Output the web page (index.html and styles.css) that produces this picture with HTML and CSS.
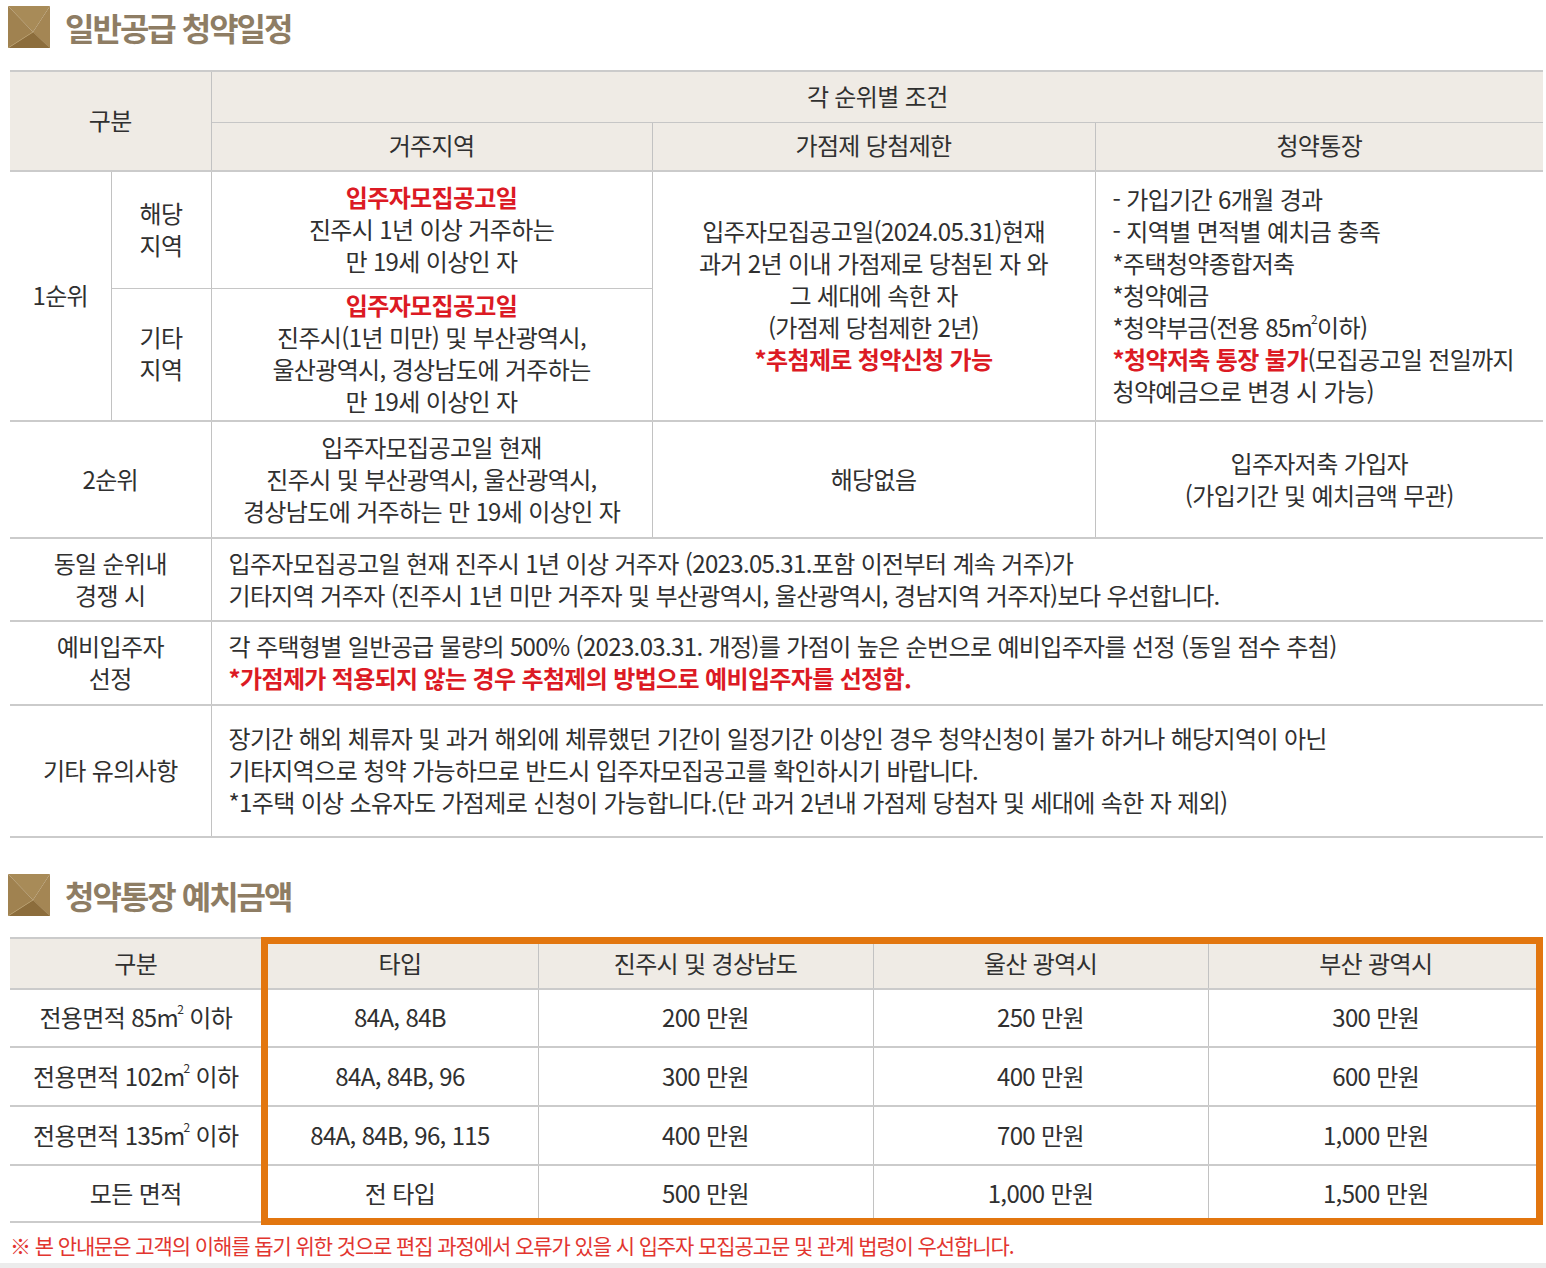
FILE: index.html
```html
<!DOCTYPE html>
<html lang="ko">
<head>
<meta charset="utf-8">
<title>일반공급 청약일정</title>
<link rel="stylesheet" href="styles.css">
</head>
<body>
<div class="page">
  <div class="section-title first">
    <svg class="title-icon" viewBox="0 0 42 42" width="42" height="42" aria-hidden="true">
      <polygon points="0,0 42,0 25,26" fill="#a88b58"/>
      <polygon points="0,0 25,26 0,42" fill="#a08250"/>
      <polygon points="42,0 42,42 25,26" fill="#a48654"/>
      <polygon points="0,42 25,26 42,42" fill="#8c6d3c"/>
      <line x1="0" y1="42" x2="25" y2="26" stroke="#b99e6c" stroke-width="0.8"/>
      <line x1="42" y1="42" x2="25" y2="26" stroke="#9a7a46" stroke-width="0.6"/>
    </svg>
    <h2 class="title-text">일반공급 청약일정</h2>
  </div>

  <table class="tbl sched">
    <colgroup>
      <col class="w101"><col class="w100"><col class="w441"><col class="w443"><col class="w448">
    </colgroup>
    <thead>
      <tr class="h-a">
        <th colspan="2" rowspan="2">구분</th>
        <th colspan="3" class="th-top">각 순위별 조건</th>
      </tr>
      <tr class="h-b">
        <th>거주지역</th>
        <th>가점제 당첨제한</th>
        <th>청약통장</th>
      </tr>
    </thead>
    <tbody>
      <tr class="r1a">
        <td rowspan="2" class="lab">1순위</td>
        <td class="lab">해당<br>지역</td>
        <td class="inner-b"><span class="red">입주자모집공고일</span><br>진주시 1년 이상 거주하는<br>만 19세 이상인 자</td>
        <td rowspan="2">입주자모집공고일(2024.05.31)현재<br>과거 2년 이내 가점제로 당첨된 자 와<br>그 세대에 속한 자<br>(가점제 당첨제한 2년)<br><span class="red">*추첨제로 청약신청 가능</span></td>
        <td rowspan="2" class="left">- 가입기간 6개월 경과<br>- 지역별 면적별 예치금 충족<br>*주택청약종합저축<br>*청약예금<br>*청약부금(전용 85m<span class="sup">2</span>이하)<br><span class="red">*청약저축 통장 불가</span>(모집공고일 전일까지<br>청약예금으로 변경 시 가능)</td>
      </tr>
      <tr class="r1b">
        <td class="lab">기타<br>지역</td>
        <td><span class="red">입주자모집공고일</span><br>진주시(1년 미만) 및 부산광역시,<br>울산광역시, 경상남도에 거주하는<br>만 19세 이상인 자</td>
      </tr>
      <tr class="r2">
        <td colspan="2">2순위</td>
        <td>입주자모집공고일 현재<br>진주시 및 부산광역시, 울산광역시,<br>경상남도에 거주하는 만 19세 이상인 자</td>
        <td>해당없음</td>
        <td>입주자저축 가입자<br>(가입기간 및 예치금액 무관)</td>
      </tr>
      <tr class="r3">
        <td colspan="2">동일 순위내<br>경쟁 시</td>
        <td colspan="3" class="left wide">입주자모집공고일 현재 진주시 1년 이상 거주자 (2023.05.31.포함 이전부터 계속 거주)가<br>기타지역 거주자 (진주시 1년 미만 거주자 및 부산광역시, 울산광역시, 경남지역 거주자)보다 우선합니다.</td>
      </tr>
      <tr class="r4">
        <td colspan="2">예비입주자<br>선정</td>
        <td colspan="3" class="left wide">각 주택형별 일반공급 물량의 500% (2023.03.31. 개정)를 가점이 높은 순번으로 예비입주자를 선정 (동일 점수 추첨)<br><span class="red">*가점제가 적용되지 않는 경우 추첨제의 방법으로 예비입주자를 선정함.</span></td>
      </tr>
      <tr class="r5">
        <td colspan="2">기타 유의사항</td>
        <td colspan="3" class="left wide">장기간 해외 체류자 및 과거 해외에 체류했던 기간이 일정기간 이상인 경우 청약신청이 불가 하거나 해당지역이 아닌<br>기타지역으로 청약 가능하므로 반드시 입주자모집공고를 확인하시기 바랍니다.<br>*1주택 이상 소유자도 가점제로 신청이 가능합니다.(단 과거 2년내 가점제 당첨자 및 세대에 속한 자 제외)</td>
      </tr>
    </tbody>
  </table>

  <div class="section-title second">
    <svg class="title-icon" viewBox="0 0 42 42" width="42" height="42" aria-hidden="true">
      <polygon points="0,0 42,0 25,26" fill="#a88b58"/>
      <polygon points="0,0 25,26 0,42" fill="#a08250"/>
      <polygon points="42,0 42,42 25,26" fill="#a48654"/>
      <polygon points="0,42 25,26 42,42" fill="#8c6d3c"/>
      <line x1="0" y1="42" x2="25" y2="26" stroke="#b99e6c" stroke-width="0.8"/>
      <line x1="42" y1="42" x2="25" y2="26" stroke="#9a7a46" stroke-width="0.6"/>
    </svg>
    <h2 class="title-text">청약통장 예치금액</h2>
  </div>

  <div class="deposit-wrap">
    <table class="tbl deposit">
      <colgroup>
        <col class="w252"><col class="w276"><col class="w335"><col class="w335"><col class="w335">
      </colgroup>
      <thead>
        <tr><th>구분</th><th>타입</th><th>진주시 및 경상남도</th><th>울산 광역시</th><th>부산 광역시</th></tr>
      </thead>
      <tbody>
        <tr class="d1"><td>전용면적 85m<span class="sup">2</span> 이하</td><td>84A, 84B</td><td>200 만원</td><td>250 만원</td><td>300 만원</td></tr>
        <tr class="d2"><td>전용면적 102m<span class="sup">2</span> 이하</td><td>84A, 84B, 96</td><td>300 만원</td><td>400 만원</td><td>600 만원</td></tr>
        <tr class="d3"><td>전용면적 135m<span class="sup">2</span> 이하</td><td>84A, 84B, 96, 115</td><td>400 만원</td><td>700 만원</td><td>1,000 만원</td></tr>
        <tr class="d4"><td>모든 면적</td><td>전 타입</td><td>500 만원</td><td>1,000 만원</td><td>1,500 만원</td></tr>
      </tbody>
    </table>
    <div class="highlight" aria-hidden="true"></div>
  </div>

  <p class="note">※ 본 안내문은 고객의 이해를 돕기 위한 것으로 편집 과정에서 오류가 있을 시 입주자 모집공고문 및 관계 법령이 우선합니다.</p>
  <div class="bottom-bar"></div>
</div>
</body>
</html>
```

FILE: styles.css
```css
* { box-sizing: border-box; }
html, body { margin: 0; padding: 0; background: #ffffff; }
body {
  font-family: "Noto Sans CJK KR", "Noto Sans", sans-serif;
  color: #303030;
}
.page {
  width: 1546px;
  height: 1268px;
  overflow: hidden;
  position: relative;
}
.section-title {
  display: flex;
  align-items: center;
  gap: 15px;
  padding-left: 8px;
  height: 42px;
}
.section-title.first { margin-top: 6px; margin-bottom: 22px; }
.section-title.second { margin-top: 36px; margin-bottom: 21px; }
.title-icon { display: block; flex: none; }
.title-text {
  margin: 0;
  font-size: 32px;
  font-weight: 700;
  letter-spacing: -2px;
  color: #8e7d64;
  line-height: 42px;
}

.tbl {
  border-collapse: collapse;
  table-layout: fixed;
  margin-left: 10px;
  width: 1533px;
  font-size: 24px;
  letter-spacing: -0.65px;
  line-height: 32px;
}
.tbl th, .tbl td {
  padding: 0 0 2px 0;
  text-align: center;
  vertical-align: middle;
  border-left: 1px solid #c2c2c2;
  border-right: 1px solid #c2c2c2;
  border-top: 2px solid #cbcbcb;
  border-bottom: 2px solid #cbcbcb;
  font-weight: 400;
}
.tbl tr > :first-child { border-left: none; }
.tbl tr > :last-child { border-right: none; }
.tbl th { background: #efebe5; }
.tbl .left { text-align: left; padding-left: 17px; }
.red { color: #dc1a24; font-weight: 700; }
.sup { font-size: 12px; vertical-align: top; line-height: 14px; position: relative; top: 1px; margin-left: -1px; }

.w101 { width: 101px; }
.w100 { width: 100px; }
.w441 { width: 441px; }
.w443 { width: 443px; }
.w448 { width: 448px; }

.sched .h-a { height: 51px; }
.sched .h-b { height: 49px; }
.sched .th-top { border-bottom: 1px solid #c6c6c6; }
.sched .h-b th { border-top: 1px solid #c6c6c6; }
.sched .r1a { height: 117px; }
.sched .r1a td.lab:not([rowspan]), .sched .r1a .inner-b { border-bottom: 1px solid #c6c6c6; }
.sched .r1b td { border-top: 1px solid #c6c6c6; }
.sched .r1b { height: 133px; }
.sched .r2 { height: 117px; }
.sched .r3 { height: 83px; }
.sched .r4 { height: 84px; }
.sched .r5 { height: 132px; }

.w252 { width: 252px; }
.w276 { width: 276px; }
.w335 { width: 335px; }

.deposit-wrap { position: relative; width: 1543px; }
.deposit thead tr { height: 51px; }
.deposit .d1 { height: 58px; }
.deposit .d2 { height: 59px; }
.deposit .d3 { height: 59px; }
.deposit .d4 { height: 57px; }
.highlight {
  position: absolute;
  left: 261px;
  top: 0;
  width: 1282px;
  height: 288px;
  border: 7px solid #e2760f;
  pointer-events: none;
}

.note {
  margin: 9px 0 0 10px;
  font-size: 21px;
  line-height: 26px;
  letter-spacing: -1.1px;
  color: #e2352f;
}
.bottom-bar {
  position: absolute;
  left: 0;
  bottom: 0;
  width: 100%;
  height: 5px;
  background: #ececec;
}
```
